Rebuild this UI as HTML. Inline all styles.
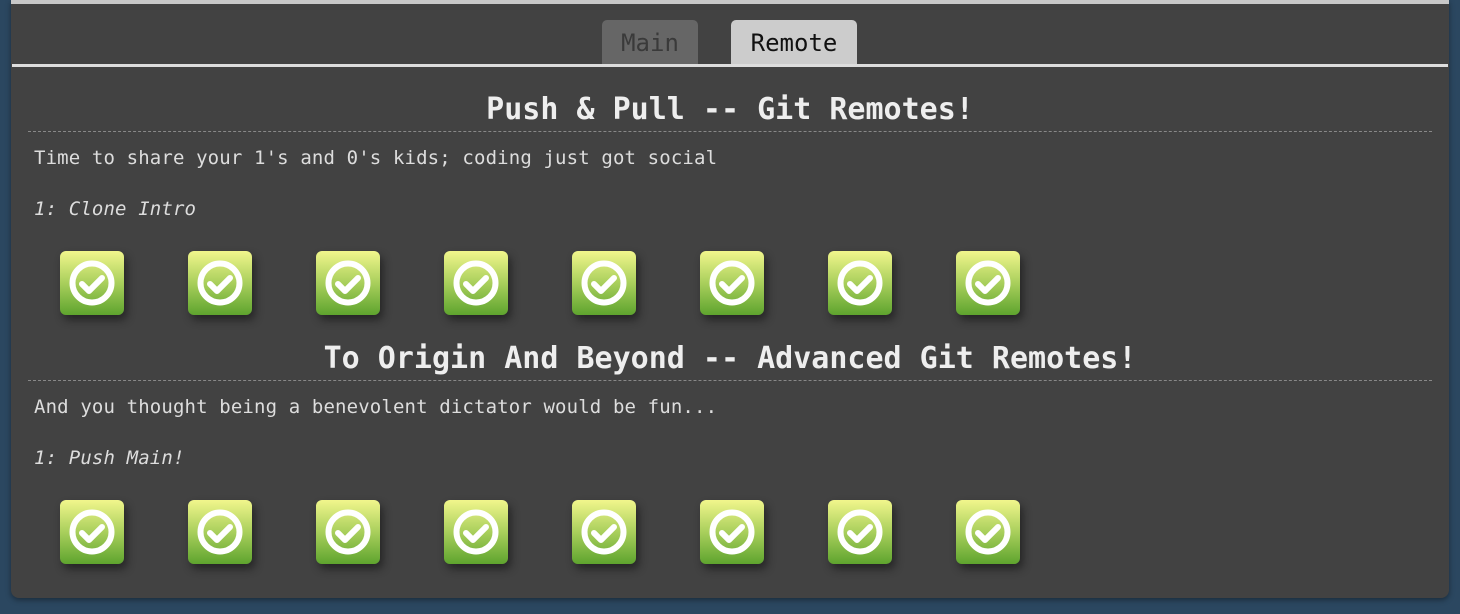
<!DOCTYPE html>
<html><head><style>
body{margin:0;width:1460px;height:614px;background:#2b4760;overflow:hidden;font-family:"DejaVu Sans Mono","Liberation Mono",monospace;}
.panel{position:absolute;left:11px;top:0;width:1438px;height:598px;background:#424242;border-radius:0 0 8px 8px;box-shadow:0 2px 6px rgba(0,0,0,.4);}
.topbar{position:absolute;left:0;top:0;width:1438px;height:4px;background:#c8c8c8;}
.line{position:absolute;left:1px;top:64px;width:1436px;height:3px;background:#ddd;}
.tab{position:absolute;top:20px;height:44px;border-radius:5px 5px 0 0;font-size:24px;line-height:46px;text-align:center;}
h2{position:absolute;left:17px;width:1404px;margin:0;text-align:center;font-size:30px;font-weight:bold;color:#eee;border-bottom:1px dashed #888;height:40px;line-height:38px;}
.t{position:absolute;left:23px;font-size:19px;letter-spacing:0.14px;color:#ddd;line-height:24px;margin:0;}
.i{font-style:italic;}
.ic{position:absolute;width:64px;height:64px;border-radius:6px;background:linear-gradient(#f1f68c,#a9cf5c 50%,#5ea42e);box-shadow:3px 5px 9px rgba(0,0,0,.45);}
.ic svg{position:absolute;left:0;top:0}
</style></head><body>
<div class="panel">
<div class="topbar"></div>
<div class="tab" style="left:591px;width:96px;background:#666;color:#3a3a3a">Main</div>
<div class="tab" style="left:720px;width:126px;background:#ccc;color:#111">Remote</div>
<div class="line"></div>
<h2 style="top:91px;height:40px">Push &amp; Pull -- Git Remotes!</h2>
<p class="t" style="top:146px">Time to share your 1's and 0's kids; coding just got social</p>
<p class="t i" style="top:197px">1: Clone Intro</p>
<h2 style="top:340px;height:40px">To Origin And Beyond -- Advanced Git Remotes!</h2>
<p class="t" style="top:395px">And you thought being a benevolent dictator would be fun...</p>
<p class="t i" style="top:446px">1: Push Main!</p>
<div id="a"></div>
</div>
<script>
var s='<svg width="64" height="64"><circle cx="32" cy="32" r="19.5" fill="none" stroke="#fff" stroke-width="6"/><path d="M22 33 L29 40 L42 27" fill="none" stroke="#fff" stroke-width="6" stroke-linecap="round" stroke-linejoin="round"/></svg>';
var h='';
[251,500].forEach(function(y){for(var k=0;k<8;k++)h+='<div class="ic" style="left:'+(49+128*k)+'px;top:'+y+'px">'+s+'</div>';});
document.getElementById('a').innerHTML=h;
</script>
</body></html>
